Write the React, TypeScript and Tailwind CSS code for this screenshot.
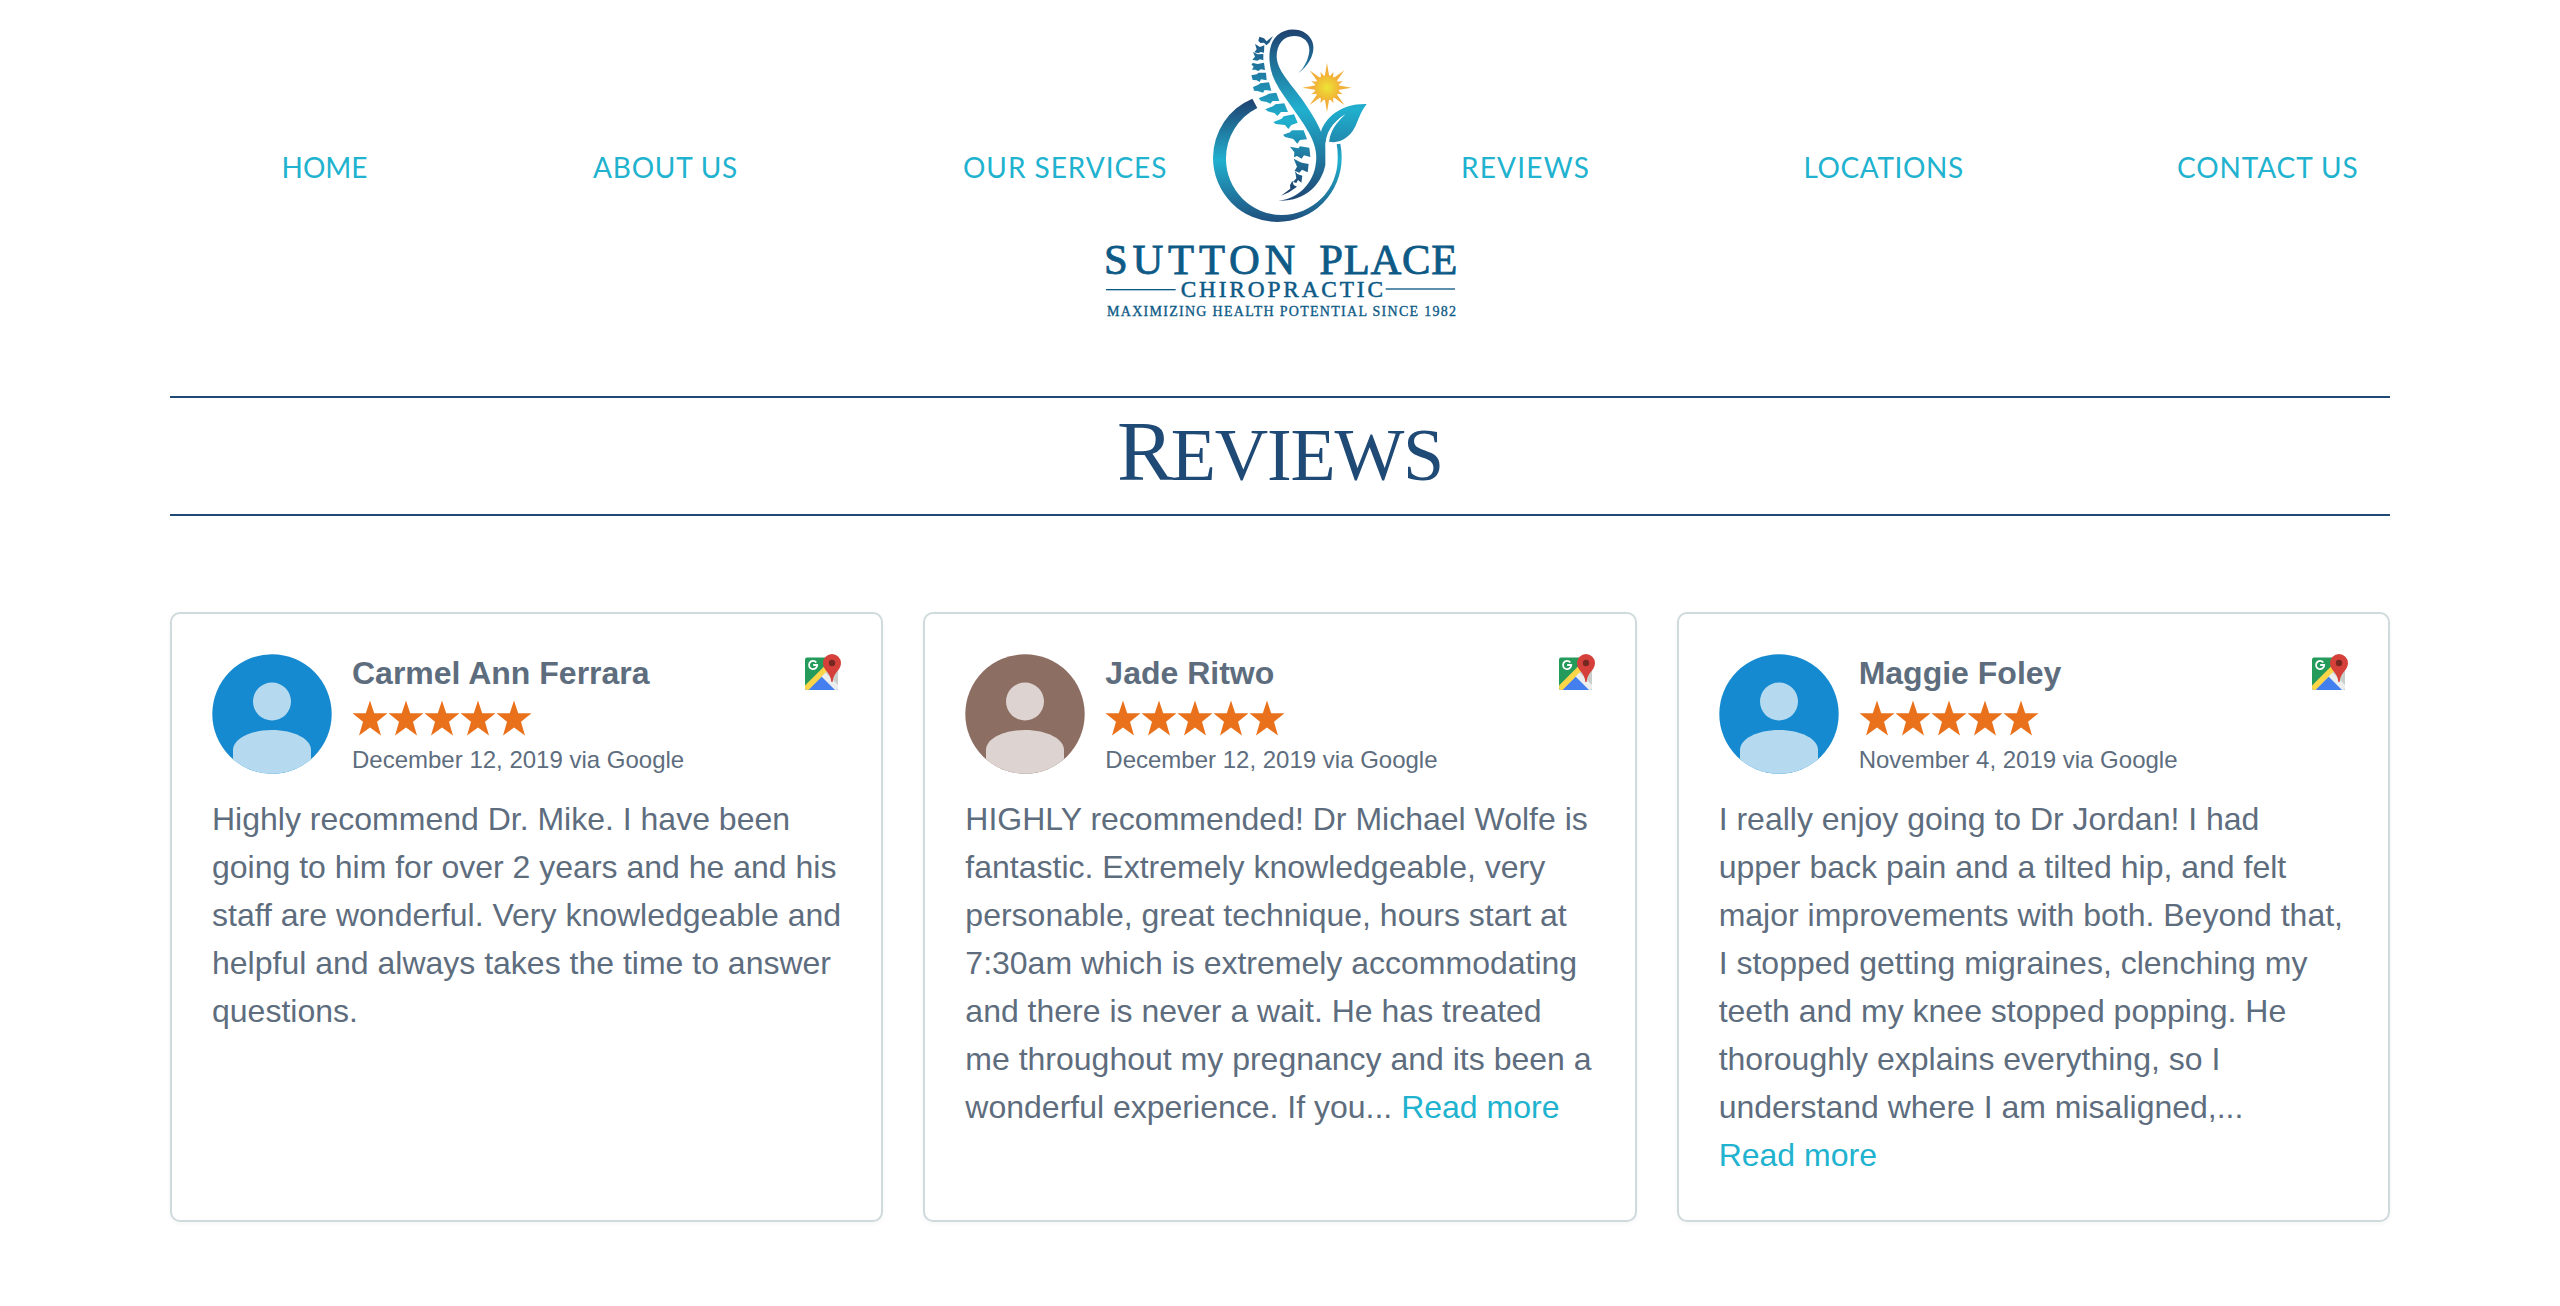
type Review = {
  name: string;
  date: string;
  bg: string;
  fg: string;
  lines: string[];
  more: "inline" | "below" | null;
};

const reviews: Review[] = [
  {
    name: "Carmel Ann Ferrara",
    date: "December 12, 2019 via Google",
    bg: "#168ad0",
    fg: "#b5daef",
    lines: [
      "Highly recommend Dr. Mike. I have been",
      "going to him for over 2 years and he and his",
      "staff are wonderful. Very knowledgeable and",
      "helpful and always takes the time to answer",
      "questions.",
    ],
    more: null,
  },
  {
    name: "Jade Ritwo",
    date: "December 12, 2019 via Google",
    bg: "#8d6e63",
    fg: "#ddd3d0",
    lines: [
      "HIGHLY recommended! Dr Michael Wolfe is",
      "fantastic. Extremely knowledgeable, very",
      "personable, great technique, hours start at",
      "7:30am which is extremely accommodating",
      "and there is never a wait. He has treated",
      "me throughout my pregnancy and its been a",
      "wonderful experience. If you...",
    ],
    more: "inline",
  },
  {
    name: "Maggie Foley",
    date: "November 4, 2019 via Google",
    bg: "#168ad0",
    fg: "#b5daef",
    lines: [
      "I really enjoy going to Dr Jordan! I had",
      "upper back pain and a tilted hip, and felt",
      "major improvements with both. Beyond that,",
      "I stopped getting migraines, clenching my",
      "teeth and my knee stopped popping. He",
      "thoroughly explains everything, so I",
      "understand where I am misaligned,...",
    ],
    more: "below",
  },
];

const navItems = [
  { label: "HOME", cls: "w-[311.5px]" },
  { label: "ABOUT US", cls: "w-[370px] tracking-[0.8px]" },
  { label: "OUR SERVICES", cls: "w-[498px] tracking-[0.95px]" },
  { label: "REVIEWS", cls: "w-[342.5px] tracking-[1.2px]" },
  { label: "LOCATIONS", cls: "w-[373.5px] tracking-[0.6px]" },
  { label: "CONTACT US", cls: "tracking-[0.9px]" },
];

const vertebrae = [
  "508,50 522,55 530,64 549,48 538,68 529,76 522,68 511,69 505,62",
  "495,72 510,81 523,76 522,98 512,96 505,100 493,97 500,88",
  "489,96 503,103 520,102 520,121 510,118 502,122 487,119 495,110",
  "484,133 489,129 503,132 522,128 525,150 512,148 505,153 496,149 486,149 491,140",
  "484,166 500,163 506,158 528,158 530,181 513,178 509,186 500,181 488,180",
  "489,201 505,194 511,190 537,187 544,212 524,210 519,218 503,213 492,212",
  "506,235 530,225 536,221 559,218 568,243 548,243 541,251 530,246 513,243",
  "526,268 550,258 556,253 583,250 594,276 573,276 562,288 553,279 533,274",
  "550,306 575,296 581,289 612,283 623,308 604,315 595,327 585,315 557,312",
  "579,344 600,337 606,331 641,331 651,358 630,360 622,371 610,357 585,351",
  "600,380 625,385 630,379 658,383 661,411 642,406 635,416 621,408 612,412 613,397",
  "611,416 630,426 636,428 656,432 653,457 636,449 628,458 614,452 621,440",
  "615,453 622,462 637,467 634,488 624,480 619,489 609,486 619,475",
  "607,482 611,495 621,500 597,517 573,527 601,506 600,496",
];

function ray(angle: number, length: number, half: number) {
  const a = (angle * Math.PI) / 180;
  const [dx, dy] = [Math.cos(a), Math.sin(a)];
  const r = 32;
  return [
    [711 + dx * length, 203 + dy * length],
    [711 + dx * r - dy * half, 203 + dy * r + dx * half],
    [711 + dx * r + dy * half, 203 + dy * r - dx * half],
  ]
    .map((p) => p.map((n) => n.toFixed(1)).join(","))
    .join(" ");
}

function Logo() {
  return (
    <svg
      viewBox="0 0 1140 930"
      className="pointer-events-none mt-5 h-[310px] w-[380px] justify-self-center [grid-area:1/1]"
      fontFamily='"Liberation Serif", serif'
      fill="#0d5a86"
    >
      <defs>
        <linearGradient id="ring" gradientUnits="userSpaceOnUse" x1="0" y1="236" x2="0" y2="606">
          <stop offset="0" stopColor="#1f3f6e" />
          <stop offset="0.5" stopColor="#21b0cf" />
          <stop offset="1" stopColor="#1f4f7d" />
        </linearGradient>
        <linearGradient id="stem" gradientUnits="userSpaceOnUse" x1="0" y1="30" x2="0" y2="545">
          <stop offset="0" stopColor="#1f4270" />
          <stop offset="0.46" stopColor="#21b0cf" />
          <stop offset="1" stopColor="#1f4573" />
        </linearGradient>
        <linearGradient id="spine" gradientUnits="userSpaceOnUse" x1="0" y1="50" x2="0" y2="527">
          <stop offset="0" stopColor="#1f5583" />
          <stop offset="0.53" stopColor="#21b0cf" />
          <stop offset="1" stopColor="#1f3a69" />
        </linearGradient>
        <radialGradient id="sun">
          <stop offset="0" stopColor="#ece535" />
          <stop offset="1" stopColor="#f2b536" />
        </radialGradient>
      </defs>
      <path
        fill="url(#ring)"
        d="M487 236A193 193 0 0 0 369 413A193 193 0 0 0 562 606A193 193 0 0 0 755 413Q755 391 751 371L740 373Q744 394 743 417A168 168 0 0 1 575 585A168 168 0 0 1 408 417A169 169 0 0 1 502 264Z"
      />
      <path
        fill="url(#stem)"
        d="M625 160C667 128 680 84 663 57C643 22 590 20 562 46C535 70 532 120 548 167C566 217 622 275 655 335C680 378 682 410 676 440C665 495 622 536 565 542C642 545 693 498 706 435L706 385C706 345 728 306 766 283C735 310 720 335 717 365C735 369 752 365 770 352C802 330 800 290 830 252C755 250 706 292 693 335C680 302 655 265 635 236C595 182 562 150 560 110C560 72 580 49 612 48C648 48 664 75 656 105C650 130 640 144 625 160Z"
      />
      <path
        fill="#fff"
        d="M766 283C726 309 706 336 706 385L712 366L717 366C720 335 738 308 766 283Z"
      />
      <g fill="url(#spine)">
        {vertebrae.map((points) => (
          <polygon key={points} points={points} />
        ))}
      </g>
      <g fill="#f2b03a">
        {[0, 45, 90, 135, 180, 225, 270, 315].map((a) => (
          <polygon key={a} points={ray(a, 74, 7)} />
        ))}
        {[22.5, 67.5, 112.5, 157.5, 202.5, 247.5, 292.5, 337.5].map((a) => (
          <polygon key={a} points={ray(a, 51, 6)} />
        ))}
      </g>
      <circle cx="711" cy="203" r="37" fill="url(#sun)" />
      <g stroke="#0d5a86">
        <text x="42" y="763" fontSize="128" strokeWidth="2.500" textLength="574">
          SUTTON
        </text>
        <text x="688" y="763" fontSize="128" strokeWidth="2.500" textLength="414">
          PLACE
        </text>
        <text x="272" y="831" fontSize="70" strokeWidth="1.500" textLength="607">
          CHIROPRACTIC
        </text>
        <text x="51" y="887" fontSize="42" strokeWidth="1" textLength="1047">
          MAXIMIZING HEALTH POTENTIAL SINCE 1982
        </text>
      </g>
      <rect x="48" y="807" width="209" height="4" />
      <rect x="887" y="805" width="208" height="4" />
    </svg>
  );
}

function Avatar({ bg, fg }: { bg: string; fg: string }) {
  return (
    <svg viewBox="0 0 120 120" className="size-[120px] shrink-0">
      <circle cx="60" cy="60" r="59.700" fill={bg} />
      <circle cx="60" cy="47.5" r="19" fill={fg} />
      <path
        fill={fg}
        d="M21 105.300V96C21 85 38 76 60 76S99 85 99 96V105.300A59.700 59.700 0 0 1 21 105.300Z"
      />
    </svg>
  );
}

function Star() {
  return (
    <svg viewBox="0 0 36 36" className="size-9" fill="#e9711c">
      <path d="M18 0.500L22.200 13.300H35.500L25 21.800L29 35.500L18 27.600L7 35.500L11 21.800L0.500 13.300H13.800Z" />
    </svg>
  );
}

function GoogleMapsIcon() {
  return (
    <svg viewBox="0 0 36 36" className="size-9 shrink-0">
      <defs>
        <clipPath id="tile">
          <rect y="3.500" width="33" height="32.500" rx="2" />
        </clipPath>
      </defs>
      <g clipPath="url(#tile)">
        <rect y="3" width="33" height="33" fill="#259b5b" />
        <path d="M16 20L33 3V36Z" fill="#c9cfca" />
        <path d="M0 36L16.500 19.500L33 36Z" fill="#447ff0" />
        <path d="M0 36V31.500L20 11.500L24 15.500L3.500 36Z" fill="#fdd548" />
        <path d="M16.500 22.500L20.500 18.500L33 31V36H30Z" fill="#eceded" />
      </g>
      <path
        d="M11.300 8.500A4.100 4.100 0 1 0 12.200 11H8.200"
        fill="none"
        stroke="#fff"
        strokeWidth="1.800"
      />
      <path
        d="M27 0A9 9 0 0 0 18 9C18 16.500 25.500 18 26.400 28H27.600C28.500 18 36 16.500 36 9A9 9 0 0 0 27 0Z"
        fill="#d5403b"
      />
      <circle cx="27" cy="9" r="3.200" fill="#752822" />
    </svg>
  );
}

function ReadMore() {
  return (
    <a href="#" className="text-[#20b2ce]">
      Read more
    </a>
  );
}

function ReviewCard({ review }: { review: Review }) {
  return (
    <article className="h-[610px] rounded-[10px] border-2 border-[#cfdadc] px-10 pt-10 shadow-[0_2px_4px_rgba(0,0,0,0.04)]">
      <div className="flex">
        <Avatar bg={review.bg} fg={review.fg} />
        <div className="ml-5 flex-1">
          <h2 className="text-[32px] leading-[38px] font-bold">{review.name}</h2>
          <div className="mt-2 flex">
            {[0, 1, 2, 3, 4].map((i) => (
              <Star key={i} />
            ))}
          </div>
          <p className="mt-[10px] text-2xl leading-7">{review.date}</p>
        </div>
        <GoogleMapsIcon />
      </div>
      <p className="mt-[21px] text-[32px] leading-[48px] whitespace-nowrap">
        {review.lines.map((line, i) => (
          <span key={i}>
            {i > 0 && <br />}
            {line}
          </span>
        ))}
        {review.more === "inline" && " "}
        {review.more === "below" && <br />}
        {review.more && <ReadMore />}
      </p>
    </article>
  );
}

export default function App() {
  return (
    <div className="min-h-[1306px] bg-white">
      <header className="grid h-[396px] items-start">
        <nav className="mt-[150px] flex pl-[281.5px] font-['Lato',sans-serif] text-[28px] leading-[34px] whitespace-nowrap text-[#20b2ce] [grid-area:1/1]">
          {navItems.map((item) => (
            <a key={item.label} href="#" className={item.cls}>
              {item.label}
            </a>
          ))}
        </nav>
        <Logo />
      </header>
      <main className="mx-auto w-[2220px]">
        <h1 className="h-[120px] border-y-2 border-[#1f4a76] text-center font-['Liberation_Serif',serif] text-[85px] leading-[107px] text-[#1f4a76]">
          <span className="tracking-[-3px]">R</span>
          <span className="text-[74px] tracking-[-1.2px]">EVIEWS</span>
        </h1>
        <section className="mt-24 grid grid-cols-3 gap-10 font-['Liberation_Sans',Arial,sans-serif] text-[#5e6d7e]">
          {reviews.map((r) => (
            <ReviewCard key={r.name} review={r} />
          ))}
        </section>
      </main>
    </div>
  );
}
